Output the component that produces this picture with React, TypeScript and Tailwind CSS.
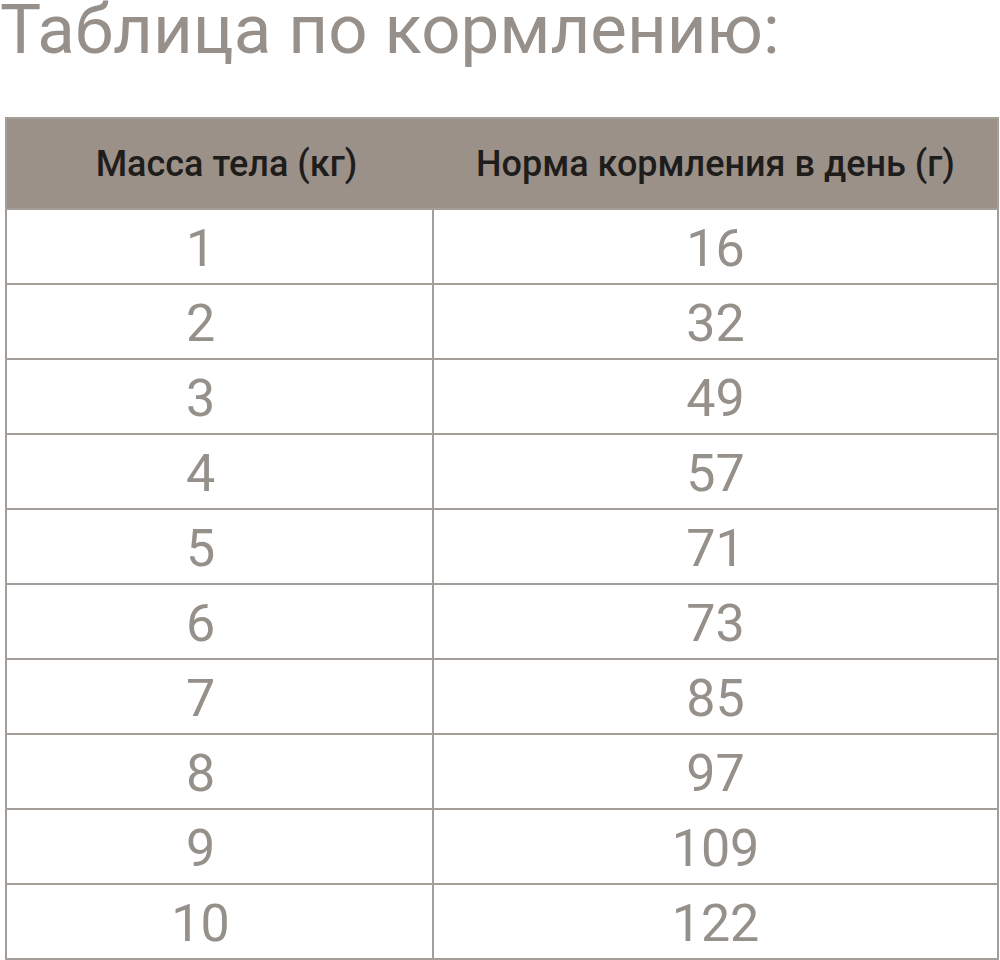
const rows = [
  { kg: '1', g: '16' },
  { kg: '2', g: '32' },
  { kg: '3', g: '49' },
  { kg: '4', g: '57' },
  { kg: '5', g: '71' },
  { kg: '6', g: '73' },
  { kg: '7', g: '85' },
  { kg: '8', g: '97' },
  { kg: '9', g: '109' },
  { kg: '10', g: '122' },
];

export default function App() {
  return (
    <div className="w-[1000px] h-[960px] bg-white overflow-hidden font-['Roboto','Liberation_Sans',sans-serif]">
      <h1 className="text-[69px] leading-[60px] font-normal text-[#97908a] whitespace-nowrap">
        Таблица по кормлению:
      </h1>

      <div className="mt-[57px] ml-[5px] w-[994px] border-2 border-[#a39e97]">
        {/* шапка таблицы */}
        <div className="grid grid-cols-[427px_1fr] h-[89px] bg-[#9b9188] text-[#1f1d1b] text-[36px] font-medium">
          <div className="flex items-center justify-center pl-[12px]">Масса тела (кг)</div>
          <div className="flex items-center justify-center">Норма кормления в день (г)</div>
        </div>

        {rows.map((row) => (
          <div
            key={row.kg}
            className="grid grid-cols-[427px_1fr] h-[75px] border-t-2 border-[#a39e97] text-[52px] text-[#95908a]"
          >
            <div className="flex items-center justify-center pr-[38px] border-r-2 border-[#a39e97]">
              {row.kg}
            </div>
            <div className="flex items-center justify-center">{row.g}</div>
          </div>
        ))}
      </div>
    </div>
  );
}
